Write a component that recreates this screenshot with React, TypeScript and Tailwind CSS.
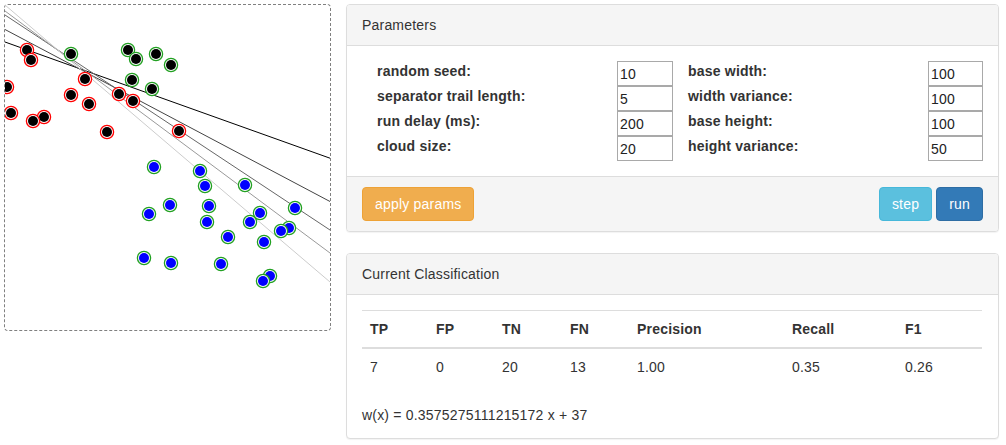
import React from "react";

type Dot = [number, number, "fn" | "tp" | "tn"];

const dots: Dot[] = [
  [27, 50, "fn"],
  [31, 60, "fn"],
  [71, 54, "tp"],
  [85, 79, "fn"],
  [7, 87, "fn"],
  [71, 95, "fn"],
  [89, 104, "fn"],
  [11, 113, "fn"],
  [44, 117, "fn"],
  [33, 121, "fn"],
  [107, 132, "fn"],
  [128, 50, "tp"],
  [136, 59, "tp"],
  [156, 54, "tp"],
  [171, 65, "tp"],
  [132, 80, "tp"],
  [152, 89, "tp"],
  [119, 94, "fn"],
  [133, 101, "fn"],
  [179, 131, "fn"],
  [154, 167, "tn"],
  [200, 171, "tn"],
  [205, 186, "tn"],
  [245, 185, "tn"],
  [170, 205, "tn"],
  [209, 206, "tn"],
  [149, 214, "tn"],
  [207, 222, "tn"],
  [260, 213, "tn"],
  [250, 222, "tn"],
  [295, 208, "tn"],
  [289, 228, "tn"],
  [281, 231, "tn"],
  [228, 237, "tn"],
  [264, 242, "tn"],
  [144, 258, "tn"],
  [171, 263, "tn"],
  [221, 264, "tn"],
  [270, 276, "tn"],
  [263, 281, "tn"],
];

// separator trail, newest first
const lines = [
  { y1: 42, y2: 158.2, c: "#000000" },
  { y1: 29.5, y2: 201.5, c: "#444444" },
  { y1: 15, y2: 230, c: "#666666" },
  { y1: 11, y2: 253, c: "#999999" },
  { y1: 5, y2: 282, c: "#cccccc" },
];

const params: [string, string, string, string][] = [
  ["random seed:", "10", "base width:", "100"],
  ["separator trail length:", "5", "width variance:", "100"],
  ["run delay (ms):", "200", "base height:", "100"],
  ["cloud size:", "20", "height variance:", "50"],
];

const cols = [
  { h: "TP", v: "7", w: "w-[66px]" },
  { h: "FP", v: "0", w: "w-[66px]" },
  { h: "TN", v: "20", w: "w-[68px]" },
  { h: "FN", v: "13", w: "w-[67px]" },
  { h: "Precision", v: "1.00", w: "w-[155px]" },
  { h: "Recall", v: "0.35", w: "w-[113px]" },
  { h: "F1", v: "0.26", w: "w-[85px]" },
];

export default function App() {
  return (
    <div className="flex h-[445px] w-[1006px] items-start bg-white pl-[4px] pt-[4px] font-['Liberation_Sans',Arial,sans-serif] text-[14px] leading-[20px] tracking-[0.2px] text-[#333]">
      <div className="h-[327px] w-[327px] shrink-0 rounded-[4px] border border-dashed border-[#808080]">
        <svg width="325" height="325" viewBox="5 5 325 325" className="block">
          {lines.map((l, i) => (
            <line key={i} x1={5} y1={l.y1} x2={330} y2={l.y2} stroke={l.c} strokeWidth={1} />
          ))}
          {dots.map(([x, y, t], i) => (
            <g key={i}>
              <circle
                cx={x}
                cy={y}
                r={6.6}
                fill="#fff"
                stroke={t === "fn" ? "#ff0000" : "#22a022"}
                strokeWidth={1.3}
              />
              <circle cx={x} cy={y} r={5} fill={t === "tn" ? "#0000ff" : "#000"} />
            </g>
          ))}
        </svg>
      </div>

      <div className="ml-[15px] flex w-[653px] shrink-0 flex-col">
        <div className="rounded-[4px] border border-[#ddd] bg-white shadow-[0_1px_1px_rgba(0,0,0,0.05)]">
          <div className="rounded-t-[3px] border-b border-[#ddd] bg-[#f5f5f5] px-[15px] py-[10px]">
            Parameters
          </div>
          <div className="py-[15px] pl-[30px] pr-[15px]">
            {params.map(([l1, v1, l2, v2]) => (
              <div key={l1} className="flex h-[25px] items-start">
                <div className="w-[240px] font-bold">{l1}</div>
                <input
                  defaultValue={v1}
                  className="h-[25px] w-[56px] border border-[#a9a9a9] px-[2px] text-[14px] text-[#222] outline-none"
                />
                <div className="ml-[15px] w-[240px] font-bold">{l2}</div>
                <input
                  defaultValue={v2}
                  className="h-[25px] w-[55px] border border-[#a9a9a9] px-[2px] text-[14px] text-[#222] outline-none"
                />
              </div>
            ))}
          </div>
          <div className="flex items-center justify-between rounded-b-[3px] border-t border-[#ddd] bg-[#f5f5f5] px-[15px] py-[10px]">
            <button className="h-[34px] rounded-[4px] border border-[#eea236] bg-[#f0ad4e] px-[12px] text-white">
              apply params
            </button>
            <div className="flex gap-[4px]">
              <button className="h-[34px] rounded-[4px] border border-[#46b8da] bg-[#5bc0de] px-[12px] text-white">
                step
              </button>
              <button className="h-[34px] rounded-[4px] border border-[#2e6da4] bg-[#337ab7] px-[12px] text-white">
                run
              </button>
            </div>
          </div>
        </div>

        <div className="mt-[21px] rounded-[4px] border border-[#ddd] bg-white shadow-[0_1px_1px_rgba(0,0,0,0.05)]">
          <div className="rounded-t-[3px] border-b border-[#ddd] bg-[#f5f5f5] px-[15px] py-[10px]">
            Current Classification
          </div>
          <div className="px-[15px] pb-[13px] pt-[15px]">
            <table className="w-[620px] table-fixed border-collapse">
              <thead>
                <tr>
                  {cols.map((c) => (
                    <th
                      key={c.h}
                      className={`${c.w} border-b-2 border-t border-[#ddd] p-[8px] text-left font-bold`}
                    >
                      {c.h}
                    </th>
                  ))}
                </tr>
              </thead>
              <tbody>
                <tr>
                  {cols.map((c) => (
                    <td key={c.h} className="border-t border-[#ddd] p-[8px] text-left">
                      {c.v}
                    </td>
                  ))}
                </tr>
              </tbody>
            </table>
            <div className="mt-[20px]">w(x) = 0.3575275111215172 x + 37</div>
          </div>
        </div>
      </div>
    </div>
  );
}
